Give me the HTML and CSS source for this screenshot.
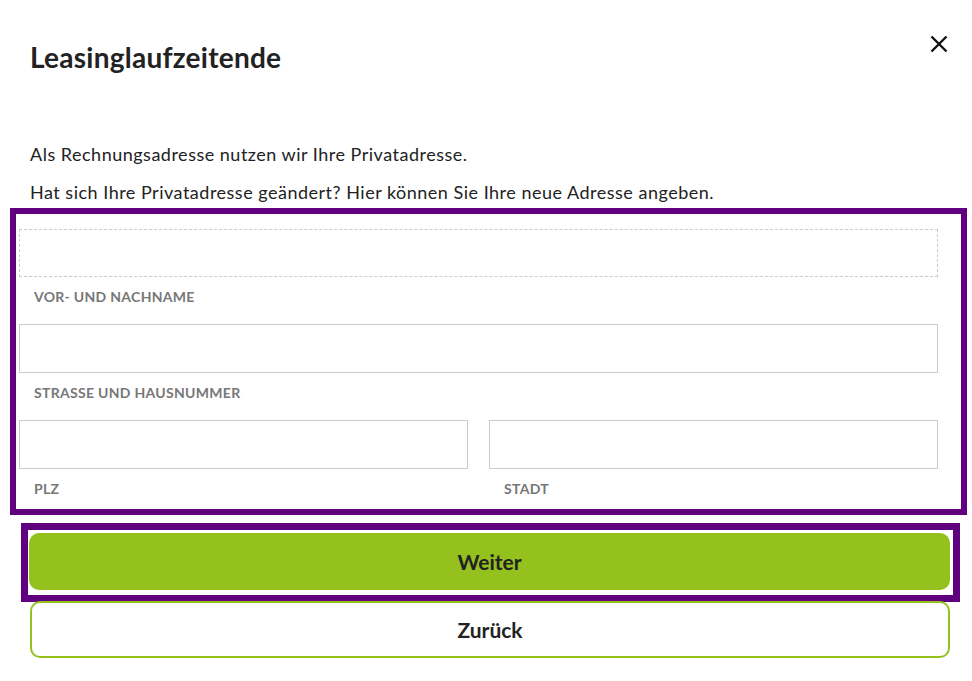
FILE: index.html
```html
<!DOCTYPE html>
<html lang="de">
<head>
<meta charset="utf-8">
<title>Leasinglaufzeitende</title>
<link rel="stylesheet" href="styles.css">
</head>
<body>
<div class="modal">
  <header class="modal-head">
    <h1 class="title">Leasinglaufzeitende</h1>
    <button class="close" aria-label="Schließen">
      <svg width="18" height="18" viewBox="0 0 18 18"><path d="M1.5 1.5L16.5 16.5M16.5 1.5L1.5 16.5" stroke="#111" stroke-width="2.4" fill="none"/></svg>
    </button>
  </header>
  <p class="text first">Als Rechnungsadresse nutzen wir Ihre Privatadresse.</p>
  <p class="text">Hat sich Ihre Privatadresse geändert? Hier können Sie Ihre neue Adresse angeben.</p>
  <form class="address">
    <div class="field">
      <div class="input dashed"></div>
      <label class="label">Vor- und Nachname</label>
    </div>
    <div class="field">
      <div class="input"></div>
      <label class="label">Strasse und Hausnummer</label>
    </div>
    <div class="row">
      <div class="field">
        <div class="input"></div>
        <label class="label">PLZ</label>
      </div>
      <div class="field">
        <div class="input"></div>
        <label class="label">Stadt</label>
      </div>
    </div>
  </form>
  <div class="actions">
    <div class="focus-ring"><button class="btn primary" type="button">Weiter</button></div>
    <button class="btn secondary" type="button">Zurück</button>
  </div>
</div>
</body>
</html>
```
FILE: styles.css
```css
* { box-sizing: border-box; }
html, body { margin: 0; padding: 0; background: #fff; }
body {
  font-family: "Lato", "Open Sans", sans-serif;
  color: #222;
}
.modal {
  width: 972px;
  padding: 0 0 0 30px;
}
.modal-head {
  display: flex;
  justify-content: space-between;
  align-items: flex-start;
  padding-top: 38px;
  height: 141px;
}
.title {
  margin: 0;
  font-size: 28px;
  line-height: 38px;
  font-weight: 700;
  letter-spacing: 0.25px;
  color: #222;
}
.close {
  background: none;
  border: 0;
  padding: 0;
  margin: -3px 24px 0 0;
  width: 18px;
  height: 18px;
  cursor: pointer;
}
.close svg { display: block; }
.text {
  margin: 0;
  font-size: 18px;
  line-height: 26px;
  letter-spacing: 0.5px;
}
.text.first { margin-bottom: 12px; }
.address {
  margin: 3px 0 0 -20px;
  width: 957px;
  border: 6px solid #600080;
  padding: 15px 23px 10px 3px;
  display: flex;
  flex-direction: column;
}
.field { display: flex; flex-direction: column; }
.input {
  height: 49px;
  border: 1px solid #ccc;
  background: #fff;
}
.input.dashed { height: 48px; border: 1px dashed #ccc; }
.label {
  font-size: 14px;
  line-height: 20px;
  font-weight: 700;
  letter-spacing: 0.3px;
  text-transform: uppercase;
  color: #777;
  padding-left: 15px;
  margin: 10px 0 17px;
}
.row {
  display: grid;
  grid-template-columns: 1fr 1fr;
  gap: 21px;
}
.row .label { margin-bottom: 0; }
.actions {
  display: flex;
  flex-direction: column;
  width: 920px;
  margin-top: 8px;
}
.focus-ring {
  margin: 0 -10px 0 -9px;
  border: 7px solid #600080;
  padding: 3px 3px 5px 1px;
}
.btn {
  display: block;
  width: 100%;
  font-family: inherit;
  font-size: 21px;
  font-weight: 700;
  color: #222;
  border-radius: 10px;
  cursor: pointer;
}
.primary {
  height: 57px;
  background: #95c11f;
  border: 0;
}
.secondary {
  height: 57px;
  background: #fff;
  border: 2px solid #95c11f;
  margin-top: -1px;
}
```
